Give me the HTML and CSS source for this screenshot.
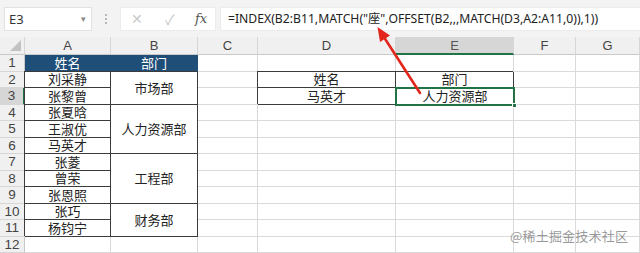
FILE: index.html
```html
<!DOCTYPE html>
<html lang="zh">
<head>
<meta charset="utf-8">
<link rel="stylesheet" href="styles.css">
</head>
<body>
<div class="app">
  <div class="fbar">
    <div class="namebox"><span>E3</span><span class="dd">▾</span></div>
    <div class="grip"><i></i><i></i><i></i></div>
    <div class="fxbox">
      <span class="ic x">✕</span>
      <span class="ic ok">✓</span>
      <span class="fx">fx</span>
    </div>
    <div class="formula">=INDEX(B2:B11,MATCH("座",OFFSET(B2,,,MATCH(D3,A2:A11,0)),1))</div>
  </div>
  <div class="sheet">
    <div class="ch corner"><span class="tri"></span></div>
    <div class="ch">A</div><div class="ch">B</div><div class="ch">C</div><div class="ch">D</div><div class="ch sel">E</div><div class="ch">F</div><div class="ch">G</div>

    <div class="rh">1</div><div class="c th">姓名</div><div class="c th">部门</div><div class="c"></div><div class="c"></div><div class="c"></div><div class="c"></div><div class="c"></div>

    <div class="rh">2</div><div class="c t">刘采静</div><div class="c t span2">市场部</div><div class="c"></div><div class="c t">姓名</div><div class="c t">部门</div><div class="c"></div><div class="c"></div>

    <div class="rh rsel">3</div><div class="c t">张黎曾</div><div class="c"></div><div class="c t">马英才</div><div class="c t active">人力资源部<span class="handle"></span></div><div class="c"></div><div class="c"></div>

    <div class="rh">4</div><div class="c t">张夏晗</div><div class="c t span3">人力资源部</div><div class="c"></div><div class="c"></div><div class="c"></div><div class="c"></div><div class="c"></div>

    <div class="rh">5</div><div class="c t">王淑优</div><div class="c"></div><div class="c"></div><div class="c"></div><div class="c"></div><div class="c"></div>

    <div class="rh">6</div><div class="c t">马英才</div><div class="c"></div><div class="c"></div><div class="c"></div><div class="c"></div><div class="c"></div>

    <div class="rh">7</div><div class="c t">张菱</div><div class="c t span3">工程部</div><div class="c"></div><div class="c"></div><div class="c"></div><div class="c"></div><div class="c"></div>

    <div class="rh">8</div><div class="c t">曾荣</div><div class="c"></div><div class="c"></div><div class="c"></div><div class="c"></div><div class="c"></div>

    <div class="rh">9</div><div class="c t">张恩照</div><div class="c"></div><div class="c"></div><div class="c"></div><div class="c"></div><div class="c"></div>

    <div class="rh">10</div><div class="c t">张巧</div><div class="c t span2">财务部</div><div class="c"></div><div class="c"></div><div class="c"></div><div class="c"></div><div class="c"></div>

    <div class="rh">11</div><div class="c t">杨钧宁</div><div class="c"></div><div class="c"></div><div class="c"></div><div class="c"></div><div class="c"></div>

    <div class="rh">12</div><div class="c"></div><div class="c"></div><div class="c"></div><div class="c"></div><div class="c"></div><div class="c"></div><div class="c"></div>
  </div>
  <svg class="arrow" width="640" height="253" viewBox="0 0 640 253">
    <polygon points="377.5,27 390,35.5 380,42" fill="#e3261c"/>
    <line x1="384.5" y1="38" x2="420" y2="93" stroke="#e3261c" stroke-width="2.6" stroke-linecap="round"/>
  </svg>
  <div class="wm">@稀土掘金技术社区</div>
</div>
</body>
</html>
```

FILE: styles.css
```css
* { box-sizing: border-box; }
html, body { margin: 0; padding: 0; }
body {
  width: 640px;
  height: 253px;
  overflow: hidden;
  background: #ffffff;
  font-family: "Noto Sans", "Noto Sans CJK SC", sans-serif;
}
.app {
  position: relative;
  width: 640px;
  height: 253px;
  overflow: hidden;
}
.fbar {
  height: 37px;
  background: #f3f3f3;
  display: flex;
  align-items: center;
  padding: 0 0 0 4px;
}
.namebox {
  flex: none;
  width: 88px;
  height: 24px;
  background: #fff;
  border: 1px solid #e2e2e2;
  display: flex;
  align-items: center;
  justify-content: space-between;
  padding: 0 5px 0 4px;
  font-size: 13px;
  color: #333;
}
.namebox .dd { font-size: 9px; color: #888; }
.grip {
  flex: none;
  width: 28px;
  display: flex;
  flex-direction: column;
  align-items: center;
  gap: 2px;
}
.grip i {
  display: block;
  width: 2px;
  height: 2px;
  background: #b8b8b8;
}
.fxbox {
  flex: none;
  width: 96px;
  height: 24px;
  background: #fff;
  border: 1px solid #ececec;
  display: flex;
  align-items: center;
  padding: 0 0 0 10px;
}
.ic { color: #c8c8c8; font-size: 14px; }
.ic.x { width: 34px; }
.ic.ok { width: 30px; }
.fx {
  font-family: "DejaVu Serif", "Liberation Serif", serif;
  font-style: italic;
  font-size: 13px;
  color: #555;
}
.formula {
  margin-left: 4px;
  flex: 1;
  min-width: 0;
  overflow: hidden;
  height: 24px;
  background: #fff;
  border: 1px solid #ececec;
  border-right: none;
  padding-left: 7px;
  font-family: "Noto Sans", "Noto Sans CJK SC", sans-serif;
  font-size: 12.2px;
  line-height: 22px;
  color: #222;
  white-space: nowrap;
}
.sheet {
  display: grid;
  grid-template-columns: 25px 86px 87px 60px 138px 118px 62px 64px;
  grid-template-rows: 18px repeat(12, 16.5px);
  font-size: 13px;
  color: #222;
}
.ch {
  background: #f0f0f0;
  border-right: 1px solid #d6d6d6;
  border-bottom: 1px solid #c9c9c9;
  display: flex;
  align-items: center;
  justify-content: center;
  color: #444;
  font-size: 13px;
  font-family: "Liberation Sans", "Noto Sans", sans-serif;
}
.ch.corner { position: relative; }
.tri {
  position: absolute;
  right: 3px;
  bottom: 3px;
  width: 0;
  height: 0;
  border-left: 11px solid transparent;
  border-bottom: 11px solid #c2c2c2;
}
.ch.sel {
  background: #d6d6d6;
  border-bottom: 2px solid #217346;
  color: #555;
}
.rh {
  background: #f0f0f0;
  border-right: 1px solid #c9c9c9;
  border-bottom: 1px solid #d6d6d6;
  display: flex;
  align-items: center;
  justify-content: center;
  color: #444;
  font-size: 13.5px;
  font-family: "Liberation Sans", "Noto Sans", sans-serif;
}
.rh.rsel {
  background: #d6d6d6;
  border-right: 2px solid #217346;
}
.c {
  border-right: 1px solid #dadada;
  border-bottom: 1px solid #dadada;
  display: flex;
  align-items: center;
  justify-content: center;
  line-height: 1;
  white-space: nowrap;
  padding-top: 1px;
}
.c.t {
  border-right-color: #3b3b3b;
  border-bottom-color: #3b3b3b;
  box-shadow: -1px -1px 0 #3b3b3b;
}
.c.th {
  background: #1f4e79;
  color: #fff;
  border-right-color: #1f4e79;
  border-bottom-color: #1f4e79;
}
.span2 { grid-row: span 2; }
.span3 { grid-row: span 3; }
.c.active {
  position: relative;
  border: none;
  box-shadow: none;
  outline: 2px solid #217346;
  outline-offset: -1px;
}
.handle {
  position: absolute;
  right: -3px;
  bottom: -3px;
  width: 5px;
  height: 5px;
  background: #217346;
  border: 1px solid #fff;
}
.arrow {
  position: absolute;
  left: 0;
  top: 0;
  pointer-events: none;
}
.wm {
  position: absolute;
  left: 510px;
  top: 226px;
  font-size: 13px;
  color: rgba(120, 120, 120, 0.75);
  font-family: "Noto Sans CJK SC", sans-serif;
  letter-spacing: 0.2px;
}
```
